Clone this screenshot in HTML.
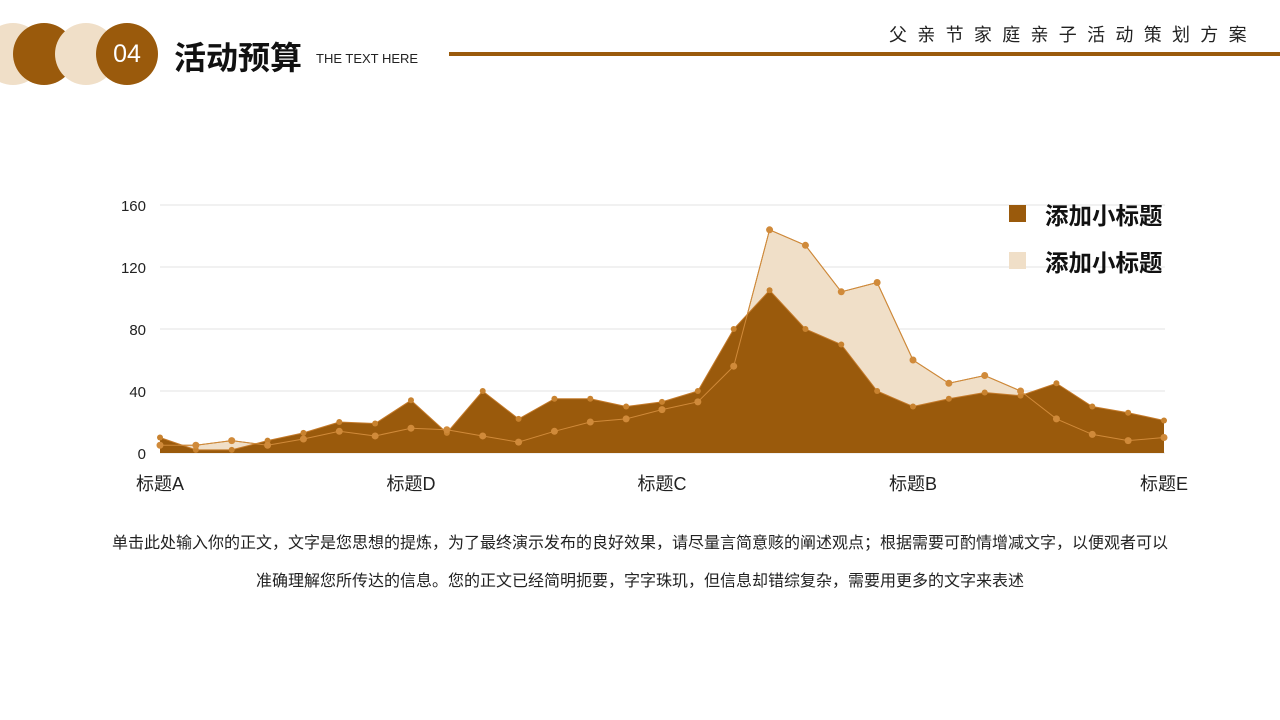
<!DOCTYPE html>
<html><head><meta charset="utf-8"><style>
body{margin:0;width:1280px;height:720px;background:#fff;position:relative;overflow:hidden;font-family:"Liberation Sans","Noto Sans CJK SC",sans-serif;}
.c{position:absolute;border-radius:50%;width:62px;height:62px;top:23px}
.t{position:absolute;white-space:nowrap}
</style></head><body>
<div class="c" style="left:-18px;background:#f0dfc8"></div>
<div class="c" style="left:13px;background:#9a5a0c"></div>
<div class="c" style="left:55px;background:#f0dfc8"></div>
<div class="c" style="left:96px;background:#9a5a0c"></div>
<div class="t" style="left:96px;width:62px;text-align:center;top:40px;color:#fff;font-size:25px">04</div>
<div class="t" style="left:174px;top:33px;font-size:32px;font-weight:bold;color:#111">活动预算</div>
<div class="t" style="left:316px;top:51px;font-size:13px;color:#222">THE TEXT HERE</div>
<div style="position:absolute;left:449px;top:52px;width:831px;height:4px;background:#9a5a0c"></div>
<div class="t" style="left:889px;top:21px;font-size:18px;letter-spacing:10.3px;color:#222">父亲节家庭亲子活动策划方案</div>
<svg id="ch" width="1280" height="720" style="position:absolute;left:0;top:0"></svg>
<div style="position:absolute;left:1009px;top:205px;width:17px;height:17px;background:#9a5a0c"></div>
<div style="position:absolute;left:1009px;top:252px;width:17px;height:17px;background:#f0dfc8"></div>
<div class="t" style="left:1045px;top:197px;font-size:23.5px;font-weight:bold;color:#111">添加小标题</div>
<div class="t" style="left:1045px;top:244px;font-size:23.5px;font-weight:bold;color:#111">添加小标题</div>
<div class="t" style="left:0;width:1280px;text-align:center;top:529px;font-size:16px;color:#222">单击此处输入你的正文，文字是您思想的提炼，为了最终演示发布的良好效果，请尽量言简意赅的阐述观点；根据需要可酌情增减文字，以便观者可以</div>
<div class="t" style="left:0;width:1280px;text-align:center;top:567px;font-size:16px;color:#222">准确理解您所传达的信息。您的正文已经简明扼要，字字珠玑，但信息却错综复杂，需要用更多的文字来表述</div>
<script>
var d=[10,2,2,8,13,20,19,34,13,40,22,35,35,30,33,40,80,105,80,70,40,30,35,39,37,45,30,26,21];
var l=[5,5,8,5,9,14,11,16,15,11,7,14,20,22,28,33,56,144,134,104,110,60,45,50,40,22,12,8,10];
function X(i){return 160+i*35.857}function Y(v){return 453-v*1.55}
var s='';
[0,40,80,120,160].forEach(function(v){s+='<line x1="160" x2="1165" y1="'+Y(v)+'" y2="'+Y(v)+'" stroke="#e3e3e3"/>';
s+='<text x="146" y="'+(Y(v)+6)+'" text-anchor="end" font-size="15" fill="#222" font-family="Liberation Sans">'+v+'</text>';});
function area(a){var p='M160,453';a.forEach(function(v,i){p+=' L'+X(i)+','+Y(v)});return p+' L1164,453Z';}
function line(a){var p='';a.forEach(function(v,i){p+=(i?' L':'M')+X(i)+','+Y(v)});return p;}
s+='<path d="'+area(l)+'" fill="#f0dfc8"/><path d="'+line(l)+'" fill="none" stroke="#b97a2c" stroke-width="1"/>';
s+='<path d="'+area(d)+'" fill="#9a5a0c"/><path d="'+line(d)+'" fill="none" stroke="#c47a2a" stroke-width="1"/>';
s+='<path d="'+line(l)+'" fill="none" stroke="#d08a3a" stroke-width="1"/>';
d.forEach(function(v,i){s+='<circle cx="'+X(i)+'" cy="'+Y(v)+'" r="3" fill="#c8822f"/>'});
l.forEach(function(v,i){s+='<circle cx="'+X(i)+'" cy="'+Y(v)+'" r="3.5" fill="#d08a3a"/>'});
[['标题A',160],['标题D',411],['标题C',662],['标题B',913],['标题E',1164]].forEach(function(t){
s+='<text x="'+t[1]+'" y="490" text-anchor="middle" font-size="18" fill="#222" font-family="Liberation Sans,Noto Sans CJK SC,sans-serif">'+t[0]+'</text>';});
document.getElementById('ch').innerHTML=s;
</script>
</body></html>
